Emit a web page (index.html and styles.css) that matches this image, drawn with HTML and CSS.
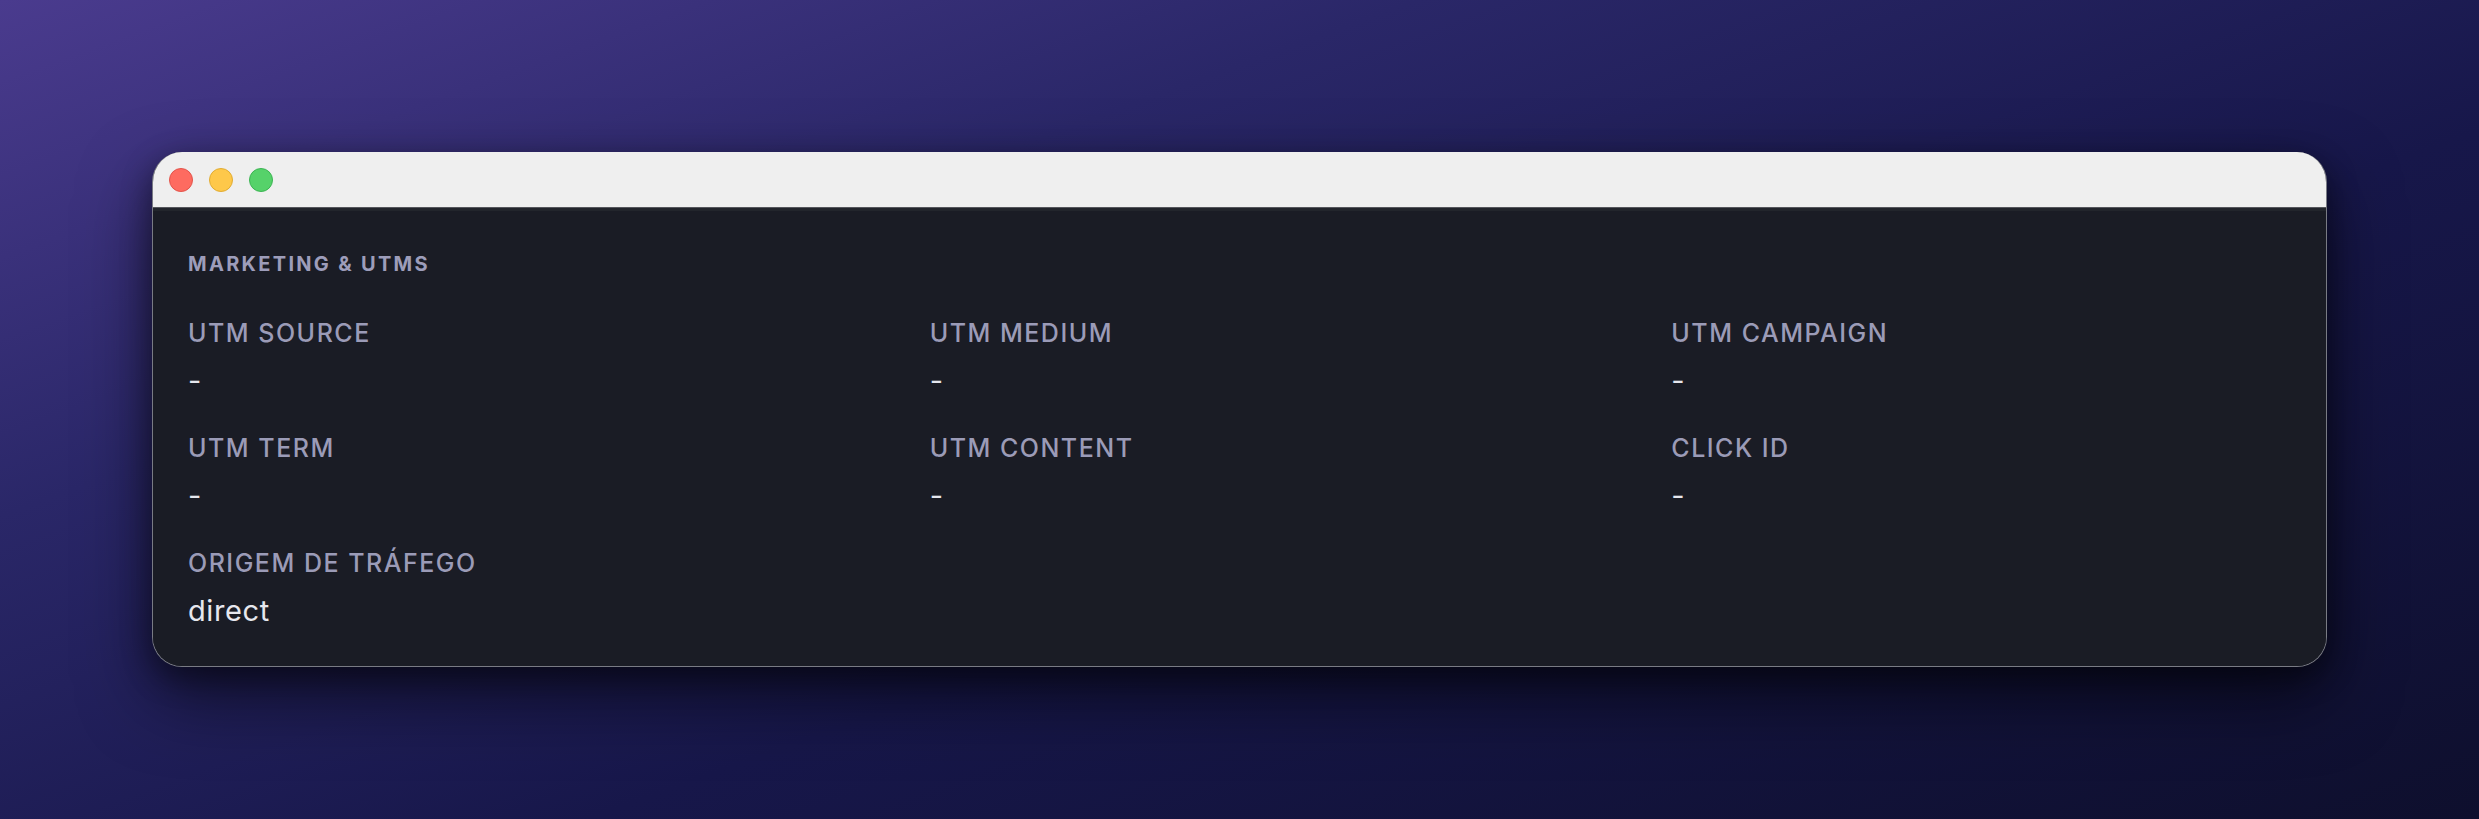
FILE: index.html
```html
<!DOCTYPE html>
<html lang="pt-BR">
<head>
<meta charset="utf-8">
<title>Marketing &amp; UTMs</title>
<link rel="stylesheet" href="styles.css">
</head>
<body>
<main class="stage">
  <section class="window">
    <header class="titlebar">
      <span class="light light-red"></span>
      <span class="light light-yellow"></span>
      <span class="light light-green"></span>
    </header>
    <div class="panel">
      <h2 class="section-title">Marketing &amp; UTMs</h2>
      <dl class="fields">
        <div class="field">
          <dt class="field-label">UTM Source</dt>
          <dd class="field-value">-</dd>
        </div>
        <div class="field">
          <dt class="field-label">UTM Medium</dt>
          <dd class="field-value">-</dd>
        </div>
        <div class="field">
          <dt class="field-label">UTM Campaign</dt>
          <dd class="field-value">-</dd>
        </div>
        <div class="field">
          <dt class="field-label">UTM Term</dt>
          <dd class="field-value">-</dd>
        </div>
        <div class="field">
          <dt class="field-label">UTM Content</dt>
          <dd class="field-value">-</dd>
        </div>
        <div class="field">
          <dt class="field-label">Click ID</dt>
          <dd class="field-value">-</dd>
        </div>
        <div class="field">
          <dt class="field-label">Origem de tráfego</dt>
          <dd class="field-value">direct</dd>
        </div>
      </dl>
    </div>
  </section>
</main>
</body>
</html>
```

FILE: styles.css
```css
* {
  box-sizing: border-box;
}

html,
body {
  margin: 0;
  height: 100%;
}

body {
  font-family: Inter, "Noto Sans", "Liberation Sans", sans-serif;
  background: linear-gradient(160deg, #4a3b8e 0%, #2a2768 30%, #17174a 60%, #0e0f2d 100%);
}

.stage {
  min-height: 100%;
  padding: 152px;
}

.window {
  width: 100%;
  border-radius: 30px;
  overflow: hidden;
  border: 1px solid rgba(200, 200, 210, 0.55);
  border-top: none;
  box-shadow: 0 30px 70px rgba(0, 0, 0, 0.55), 0 10px 30px rgba(0, 0, 0, 0.4);
  background: #1a1d26;
}

.titlebar {
  height: 56px;
  display: flex;
  align-items: center;
  gap: 16px;
  padding-left: 16px;
  background: #efefef;
  border-bottom: 1px solid #55565c;
}

.light {
  width: 24px;
  height: 24px;
  border-radius: 50%;
}

.light-red {
  background: #fe6b60;
  border: 1px solid #e2544b;
}

.light-yellow {
  background: #fec84a;
  border: 1px solid #e0ac33;
}

.light-green {
  background: #56d26a;
  border: 1px solid #3cb453;
}

.panel {
  padding: 42px 35px 35px;
  background: #1a1c25;
  box-shadow: inset 0 3px 0 #22252c;
}

.section-title {
  margin: 0 0 37px;
  font-size: 20px;
  line-height: 28px;
  font-weight: 700;
  letter-spacing: 2.3px;
  text-transform: uppercase;
  color: #9d9dba;
}

.fields {
  margin: 0;
  display: grid;
  grid-template-columns: repeat(3, 1fr);
  column-gap: 122px;
  row-gap: 29px;
}

.field {
  display: flex;
  flex-direction: column;
  gap: 10px;
}

.field-label {
  font-size: 25px;
  line-height: 36px;
  font-weight: 500;
  letter-spacing: 1.5px;
  text-transform: uppercase;
  color: #9b9bb7;
}

.field-value {
  margin: 0;
  font-size: 29px;
  line-height: 40px;
  font-weight: 400;
  letter-spacing: 0.6px;
  color: #e6e7ee;
}
```
